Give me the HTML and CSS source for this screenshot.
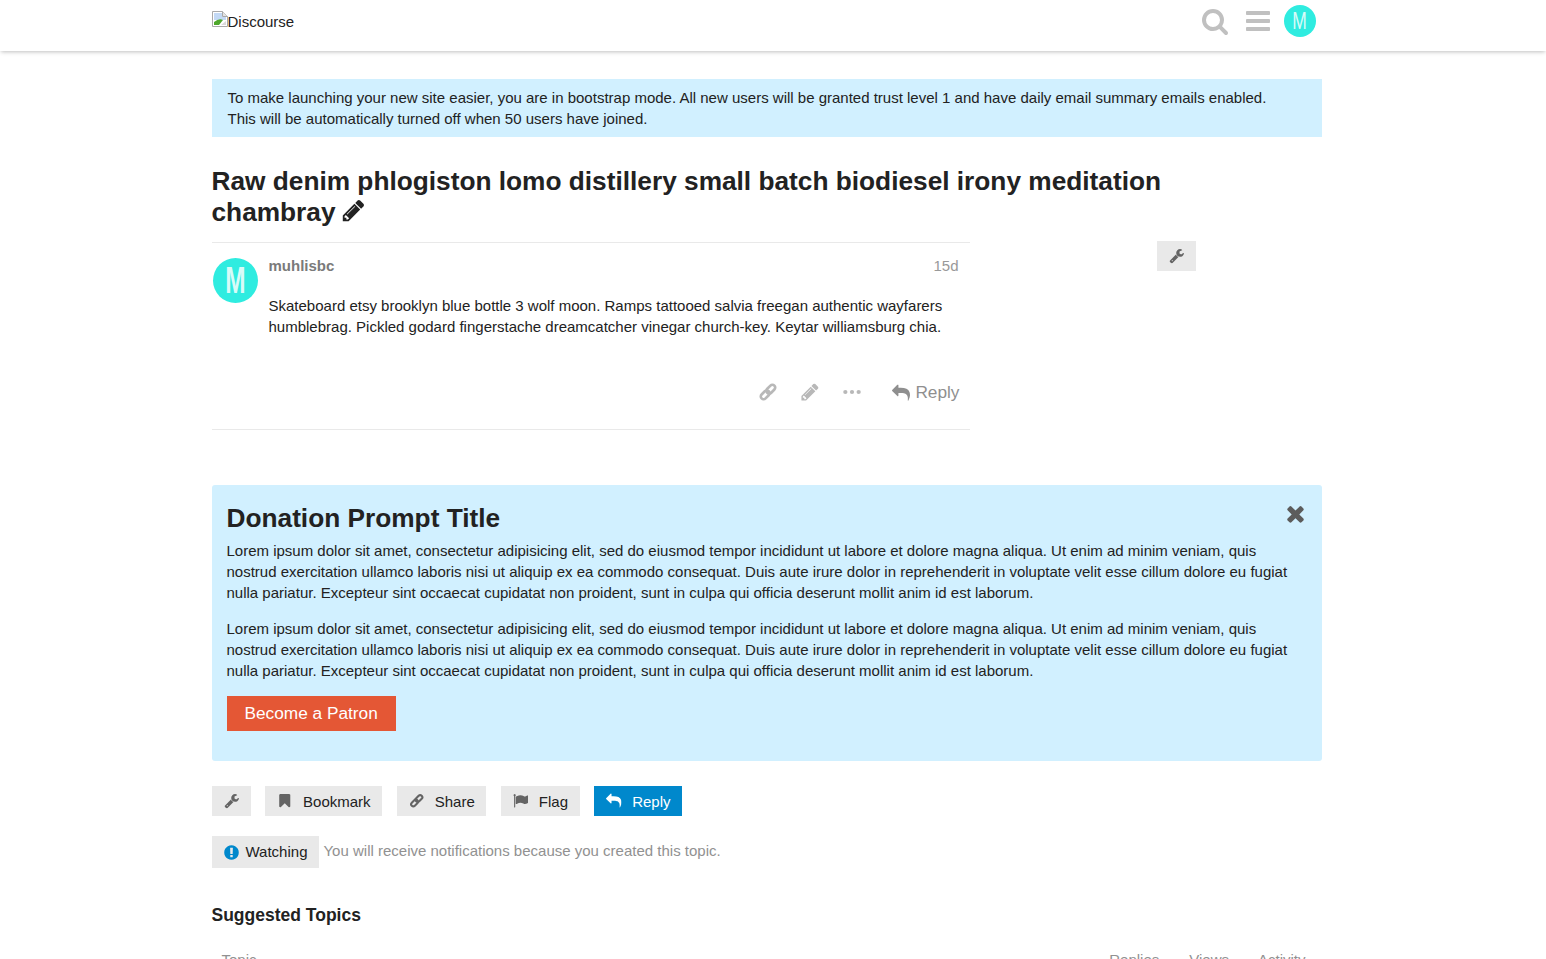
FILE: index.html
```html
<!DOCTYPE html>
<html lang="en">
<head>
  <meta charset="UTF-8">
  <title>Raw denim phlogiston lomo distillery small batch biodiesel irony meditation chambray</title>
  <link rel="stylesheet" href="styles.css">
</head>
<body>

  <svg class="sprite" xmlns="http://www.w3.org/2000/svg">
    <symbol id="i-search" viewBox="0 0 1792 1792"><path d="M1216 832q0-185-131.500-316.500t-316.500-131.500-316.500 131.500-131.500 316.500 131.500 316.500 316.500 131.500 316.500-131.500 131.500-316.500zm512 832q0 52-38 90t-90 38q-54 0-90-38l-343-342q-179 124-399 124-143 0-273.500-55.500t-225-150-150-225-55.500-273.500 55.500-273.500 150-225 225-150 273.500-55.500 273.500 55.500 225 150 150 225 55.500 273.500q0 220-124 399l343 343q37 37 37 90z"/></symbol>
    <symbol id="i-bars" viewBox="0 0 1792 1792"><path d="M1664 1344v128q0 26-19 45t-45 19h-1408q-26 0-45-19t-19-45v-128q0-26 19-45t45-19h1408q26 0 45 19t19 45zm0-512v128q0 26-19 45t-45 19h-1408q-26 0-45-19t-19-45v-128q0-26 19-45t45-19h1408q26 0 45 19t19 45zm0-512v128q0 26-19 45t-45 19h-1408q-26 0-45-19t-19-45v-128q0-26 19-45t45-19h1408q26 0 45 19t19 45z"/></symbol>
    <symbol id="i-pencil" viewBox="0 0 1792 1792"><path d="M491 1536l91-91-235-235-91 91v107h128v128h107zm523-928q0-22-22-22-10 0-17 7l-542 542q-7 7-7 17 0 22 22 22 10 0 17-7l542-542q7-7 7-17zm-54-192l416 416-832 832h-416v-416zm683 96q0 53-37 90l-166 166-416-416 166-165q36-38 90-38 53 0 91 38l235 234q37 39 37 91z"/></symbol>
    <symbol id="i-link" viewBox="0 0 1792 1792"><g fill="none" stroke="currentColor" stroke-width="240"><rect x="700" y="392" width="900" height="500" rx="250" transform="rotate(-45 1150 642)"/><rect x="192" y="900" width="900" height="500" rx="250" transform="rotate(-45 642 1150)"/></g></symbol>
    <symbol id="i-dots" viewBox="0 0 1792 1792"><circle cx="300" cy="896" r="190"/><circle cx="896" cy="896" r="190"/><circle cx="1492" cy="896" r="190"/></symbol>
    <symbol id="i-reply" viewBox="0 0 1792 1792"><path d="M1792 1120q0 166-127 451-3 7-10.500 24t-13.500 30-13 22q-12 17-28 17-15 0-23.500-10t-8.500-25q0-9 2.500-26.500t2.500-23.500q5-68 5-123 0-101-17.500-181t-48.500-138.500-80-101-105.500-69.500-133-42.500-154-21.500-175.500-6h-224v256q0 26-19 45t-45 19-45-19l-512-512q-19-19-19-45t19-45l512-512q19-19 45-19t45 19 19 45v256h224q713 0 875 403 53 134 53 333z"/></symbol>
    <symbol id="i-wrench" viewBox="0 0 1792 1792"><path d="M448 1472q0-26-19-45t-45-19-45 19-19 45 19 45 45 19 45-19 19-45zm644-420l-682 682q-37 37-90 37-52 0-91-37l-106-108q-38-36-38-90 0-53 38-91l681-681q39 98 114.500 173.500t173.500 114.500zm634-435q0 39-23 106-47 134-164.500 217.500t-258.500 83.500q-185 0-316.500-131.500t-131.500-316.500 131.500-316.500 316.500-131.500q58 0 121.500 16.500t107.500 46.500q16 11 16 28t-16 28l-293 169v224l193 107q5-3 79-48.500t135.500-81 70.500-35.500q15 0 23.500 10t8.500 25z"/></symbol>
    <symbol id="i-bookmark" viewBox="0 0 1792 1792"><path d="M1420 128q23 0 44 9 33 13 52.500 41t19.500 62v1289q0 34-19.500 62t-52.500 41q-19 8-44 8-48 0-83-32l-441-424-441 424q-36 33-83 33-23 0-44-9-33-13-52.500-41t-19.500-62v-1289q0-34 19.500-62t52.500-41q21-9 44-9h1048z"/></symbol>
    <symbol id="i-flag" viewBox="0 0 1792 1792"><path d="M320 256q0 72-64 110v1266q0 13-9.500 22.500t-22.500 9.500h-64q-13 0-22.500-9.500t-9.500-22.500v-1266q-64-38-64-110 0-53 37.500-90.500t90.500-37.500 90.500 37.500 37.500 90.500zm1472 64v763q0 25-12.500 38.500t-39.500 27.500q-215 116-369 116-61 0-123.500-22t-108.500-48-115.500-48-142.500-22q-192 0-464 146-17 9-33 9-26 0-45-19t-19-45v-742q0-32 31-55 21-14 79-43 236-120 421-120 107 0 200 29t219 88q38 19 88 19 54 0 117.500-21t110-47 88-47 54.500-21q26 0 45 19t19 45z"/></symbol>
    <symbol id="i-times" viewBox="0 0 1792 1792"><path d="M1490 1322q0 40-28 68l-136 136q-28 28-68 28t-68-28l-294-294-294 294q-28 28-68 28t-68-28l-136-136q-28-28-28-68t28-68l294-294-294-294q-28-28-28-68t28-68l136-136q28-28 68-28t68 28l294 294 294-294q28-28 68-28t68 28l136 136q28 28 28 68t-28 68l-294 294 294 294q28 28 28 68z"/></symbol>
    <symbol id="i-notice" viewBox="0 0 1792 1792"><path d="M896 128q209 0 385.500 103t279.500 279.500 103 385.500-103 385.500-279.500 279.500-385.500 103-385.500-103-279.500-279.500-103-385.500 103-385.500 279.500-279.500 385.500-103zm128 1247v-190q0-14-9-23.500t-22-9.500h-192q-13 0-23 10t-10 23v190q0 13 10 23t23 10h192q13 0 22-9.500t9-23.500zm-2-344l18-621q0-12-10-18-10-8-24-8h-220q-14 0-24 8-10 6-10 18l17 621q0 10 10 17.500t24 7.500h185q14 0 23.500-7.500t11.500-17.500z"/></symbol>
  </svg>

  <header class="site-header">
    <div class="wrap header-row">
      <a class="logo">
        <svg class="broken-img" viewBox="0 0 16 16" xmlns="http://www.w3.org/2000/svg">
          <path d="M.5.500h10l5 5v10H.5z" fill="#fff" stroke="#a9a9a9"/>
          <path d="M10.500.500v5h5" fill="#e4e4e4" stroke="#a9a9a9"/>
          <path d="M2 2h8v4h4v3H2z" fill="#c3d9f5"/>
          <path d="M2 14v-3q5-4 9-2l-4 5z" fill="#4fa82c"/>
          <path d="M9 14l5-4v4z" fill="#d9d9d9"/>
        </svg><span>Discourse</span>
      </a>
      <div class="header-icons">
        <svg class="icon icon-search"><use href="#i-search"/></svg>
        <svg class="icon icon-bars"><use href="#i-bars"/></svg>
        <span class="avatar avatar-small"><span>M</span></span>
      </div>
    </div>
  </header>

  <main class="wrap">
    <div class="global-notice">
      To make launching your new site easier, you are in bootstrap mode. All new users will be granted trust level 1 and have daily email summary emails enabled. This will be automatically turned off when 50 users have joined.
    </div>

    <h1 class="topic-title">Raw denim phlogiston lomo distillery small batch biodiesel irony meditation chambray <svg class="icon title-pencil"><use href="#i-pencil"/></svg></h1>

    <div class="post-area">
      <article class="post">
        <span class="avatar avatar-large"><span>M</span></span>
        <div class="post-main">
          <div class="post-meta">
            <span class="username">muhlisbc</span>
            <span class="post-date">15d</span>
          </div>
          <p class="post-body">Skateboard etsy brooklyn blue bottle 3 wolf moon. Ramps tattooed salvia freegan authentic wayfarers humblebrag. Pickled godard fingerstache dreamcatcher vinegar church-key. Keytar williamsburg chia.</p>
          <div class="post-actions">
            <svg class="icon"><use href="#i-link"/></svg>
            <svg class="icon"><use href="#i-pencil"/></svg>
            <svg class="icon icon-dots"><use href="#i-dots"/></svg>
            <span class="reply-link"><svg class="icon"><use href="#i-reply"/></svg>Reply</span>
          </div>
        </div>
      </article>
      <button class="btn admin-btn" type="button"><svg class="icon"><use href="#i-wrench"/></svg></button>
    </div>

    <section class="donation">
      <svg class="icon donation-close"><use href="#i-times"/></svg>
      <h2>Donation Prompt Title</h2>
      <p>Lorem ipsum dolor sit amet, consectetur adipisicing elit, sed do eiusmod tempor incididunt ut labore et dolore magna aliqua. Ut enim ad minim veniam, quis nostrud exercitation ullamco laboris nisi ut aliquip ex ea commodo consequat. Duis aute irure dolor in reprehenderit in voluptate velit esse cillum dolore eu fugiat nulla pariatur. Excepteur sint occaecat cupidatat non proident, sunt in culpa qui officia deserunt mollit anim id est laborum.</p>
      <p>Lorem ipsum dolor sit amet, consectetur adipisicing elit, sed do eiusmod tempor incididunt ut labore et dolore magna aliqua. Ut enim ad minim veniam, quis nostrud exercitation ullamco laboris nisi ut aliquip ex ea commodo consequat. Duis aute irure dolor in reprehenderit in voluptate velit esse cillum dolore eu fugiat nulla pariatur. Excepteur sint occaecat cupidatat non proident, sunt in culpa qui officia deserunt mollit anim id est laborum.</p>
      <a class="patron-btn">Become a Patron</a>
    </section>

    <div class="topic-buttons">
      <button class="btn" type="button"><svg class="icon"><use href="#i-wrench"/></svg></button>
      <button class="btn" type="button"><svg class="icon"><use href="#i-bookmark"/></svg>Bookmark</button>
      <button class="btn" type="button"><svg class="icon"><use href="#i-link"/></svg>Share</button>
      <button class="btn" type="button"><svg class="icon"><use href="#i-flag"/></svg>Flag</button>
      <button class="btn btn-primary" type="button"><svg class="icon"><use href="#i-reply"/></svg>Reply</button>
    </div>

    <div class="notifications">
      <button class="btn btn-watching" type="button"><svg class="icon"><use href="#i-notice"/></svg>Watching</button>
      <span class="notifications-text">You will receive notifications because you created this topic.</span>
    </div>

    <h3 class="suggested-title">Suggested Topics</h3>
    <div class="suggested-head">
      <span class="col-topic">Topic</span>
      <span class="col-replies">Replies</span>
      <span class="col-views">Views</span>
      <span class="col-activity">Activity</span>
    </div>
  </main>

</body>
</html>
```

FILE: styles.css
```css
html, body { height: 100%; overflow: hidden; }
body {
  margin: 0;
  font-family: "Liberation Sans", Arial, sans-serif;
  font-size: 15px;
  line-height: 21px;
  color: #222;
  background: #fff;
}
.sprite { display: none; }
.wrap { width: 1110px; margin: 0 auto 0 211.5px; }
.icon { width: 1em; height: 1em; fill: currentColor; flex: none; }

.site-header { height: 51px; background: #fff; box-shadow: 0 2px 4px -1px rgba(0,0,0,0.25); }
.header-row { display: flex; justify-content: space-between; align-items: center; height: 42px; }
.logo { display: flex; align-items: center; margin-top: 1px; color: #222; }
.broken-img { width: 16px; height: 16px; margin-top: -6px; }
.header-icons { display: flex; align-items: center; color: #c0c0c0; padding-right: 6px; }
.icon-search { font-size: 28px; margin-right: 15px; }
.icon-bars { font-size: 28px; margin-right: 12px; }

.avatar { display: flex; align-items: center; justify-content: center; border-radius: 50%; background: #2fece0; color: #d8fbf8; flex: none; }
.avatar span { display: block; transform: scaleX(0.76); }
.avatar-small { width: 32px; height: 32px; font-size: 23px; }
.avatar-large { width: 45px; height: 45px; font-size: 37px; font-weight: bold; margin: 15px 11px 0 1px; }
.avatar-large span { transform: scaleX(0.66); }

.global-notice { margin-top: 28px; padding: 8px 50px 8px 16px; background: #d1f0ff; }

.topic-title { margin: 29px 0 0; max-width: 1000px; font-size: 26.25px; line-height: 31px; font-weight: bold; color: #222; }
.title-pencil { font-size: 25px; margin-left: -2px; vertical-align: -2px; }

.post-area { display: flex; align-items: flex-start; margin-top: 14px; }
.post { display: flex; width: 758px; height: 186px; border-top: 1px solid #e9e9e9; border-bottom: 1px solid #e9e9e9; }
.post-main { flex: 1; padding-right: 11px; }
.post-meta { display: flex; justify-content: space-between; margin-top: 12px; }
.username { font-weight: bold; color: #7a7a7a; }
.post-date { color: #999; }
.post-body { margin: 19px 0 0; }
.post-actions { display: flex; justify-content: flex-end; align-items: center; margin: 45px -1px 0 0; color: #b8b8b8; }
.post-actions .icon { font-size: 20px; margin: -2px 22px 0 0; }
.post-actions .icon-dots { margin-right: 30px; }
.reply-link { display: flex; align-items: center; color: #8f8f8f; font-size: 17.25px; }
.post-actions .reply-link .icon { font-size: 18px; margin: 0 5px 0 0; color: #8f8f8f; }

.btn { display: inline-flex; align-items: center; height: 30px; padding: 0 11.500px 0 12px; border: 0; background: #e9e9e9; color: #222; font-family: inherit; font-size: 15px; }
.btn .icon { font-size: 15.5px; margin-right: 10.5px; color: #646464; }
.admin-btn { margin: -1px 0 0 187px; }
.admin-btn .icon, .topic-buttons .btn:first-child .icon { margin-right: 0; }

.donation { position: relative; margin-top: 55px; height: 276px; box-sizing: border-box; padding: 16px 15px; background: #d1f0ff; border-radius: 3px; }
.donation h2 { margin: 0; font-size: 26.25px; line-height: 34px; font-weight: bold; color: #222; }
.donation p { margin: 0 0 15px; }
.donation h2 + p { margin-top: 5px; }
.donation-close { position: absolute; top: 16px; right: 14px; font-size: 25px; color: #5c5c5c; }
.patron-btn { display: inline-block; padding: 7px 18px; background: #e45735; color: #fff; font-size: 17.25px; }

.topic-buttons { display: flex; gap: 14.6px; margin-top: 25px; }
.btn-primary { padding-right: 12px; background: #0088cc; color: #fff; }
.btn-primary .icon { color: #fff; }

.notifications { display: flex; align-items: center; margin-top: 20px; }
.btn-watching { height: 32px; padding: 0 12px 2px 12px; }
.btn-watching .icon { font-size: 17px; margin: 2px 5.500px 0 -0.500px; color: #0088cc; }
.notifications-text { margin: -4px 0 0 4px; color: #919191; }

.suggested-title { margin: 36px 0 0; font-size: 17.5px; line-height: 22px; font-weight: bold; color: #222; }
.suggested-head { display: flex; margin-top: 23px; color: #919191; }
.col-topic { margin-left: 10px; flex: 1; }
.col-views { margin-left: 30px; }
.col-activity { margin: 0 16px 0 29px; }
```
